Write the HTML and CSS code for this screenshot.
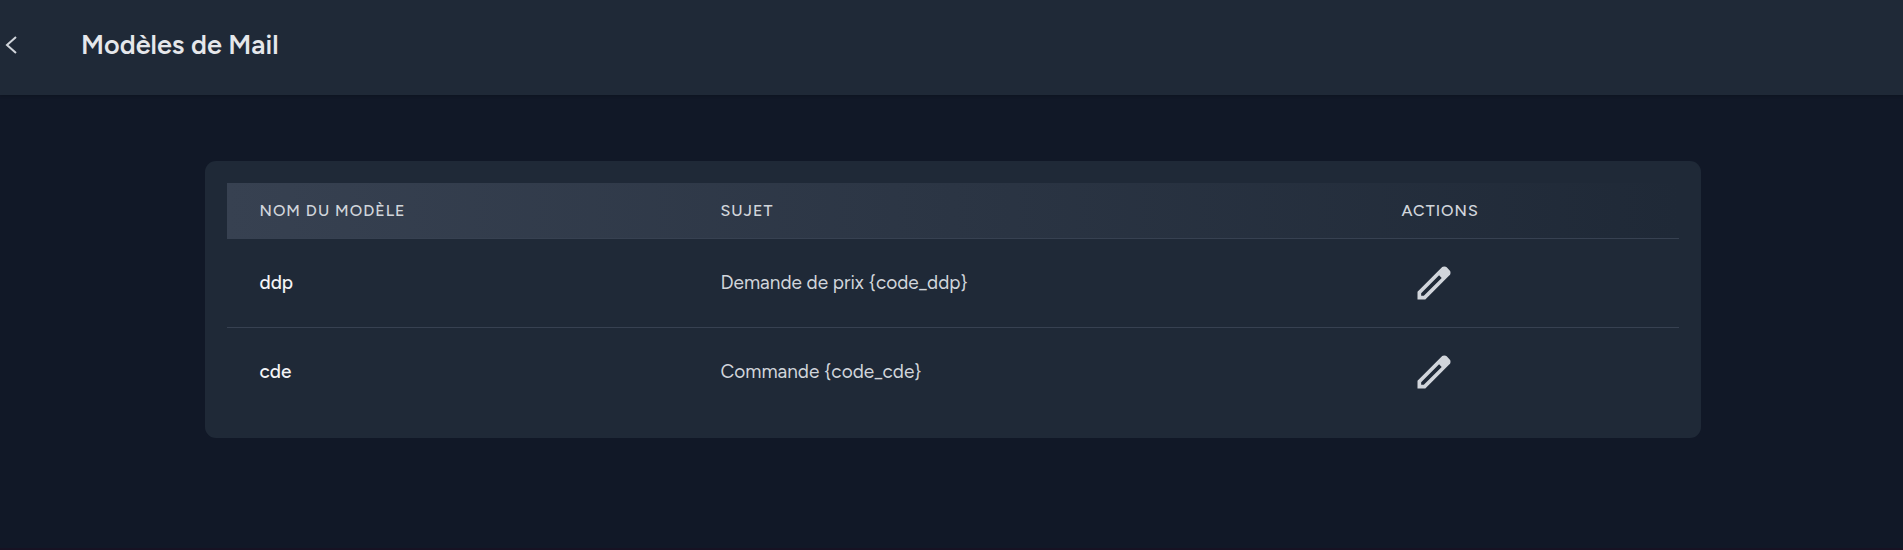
FILE: index.html
```html
<!DOCTYPE html>
<html lang="fr">
<head>
<meta charset="utf-8">
<meta name="viewport" content="width=device-width, initial-scale=1">
<title>Modèles de Mail</title>
<link rel="stylesheet" href="styles.css">
</head>
<body>
<header class="topbar">
  <a class="back" href="#" aria-label="Retour">
    <svg class="back-icon" viewBox="0 0 12 18" aria-hidden="true"><path d="M11 1 2 9l9 8"/></svg>
  </a>
  <h1 class="title">Modèles de Mail</h1>
</header>
<main class="content">
  <section class="card">
    <table class="models">
      <thead>
        <tr><th class="col-name" scope="col">Nom du modèle</th><th class="col-subject" scope="col">Sujet</th><th class="col-actions" scope="col">Actions</th></tr>
      </thead>
      <tbody>
        <tr>
          <td class="name">ddp</td>
          <td>Demande de prix {code_ddp}</td>
          <td><a class="edit" href="#" aria-label="Modifier ddp"><svg class="edit-icon" viewBox="0 -960 960 960" aria-hidden="true"><path d="M200-200h57l391-391-57-57-391 391v57Zm-80 80v-170l528-527q12-11 26.500-17t30.500-6q16 0 31 6t26 18l55 56q12 11 17.500 26t5.500 30q0 16-5.500 30.500T817-647L290-120H120Z"/></svg></a></td>
        </tr>
        <tr>
          <td class="name">cde</td>
          <td>Commande {code_cde}</td>
          <td><a class="edit" href="#" aria-label="Modifier cde"><svg class="edit-icon" viewBox="0 -960 960 960" aria-hidden="true"><path d="M200-200h57l391-391-57-57-391 391v57Zm-80 80v-170l528-527q12-11 26.500-17t30.500-6q16 0 31 6t26 18l55 56q12 11 17.500 26t5.500 30q0 16-5.500 30.500T817-647L290-120H120Z"/></svg></a></td>
        </tr>
      </tbody>
    </table>
  </section>
</main>
</body>
</html>
```
FILE: styles.css
```css
* {
  box-sizing: border-box;
}

body {
  margin: 0;
  min-height: 100vh;
  background: #111827;
  border-bottom: 2px solid #171223;
  color: #d1d5db;
  font-family: Figtree, Lato, "Open Sans", sans-serif;
}

.topbar {
  display: flex;
  align-items: center;
  gap: 64px;
  padding: 28px 5px 33px;
  background: #1f2937;
  box-shadow: 0 1px 3px rgb(0 0 0 / 20%);
}

.back {
  display: flex;
  color: #d1d5db;
}

.back-icon {
  width: 12px;
  height: 18px;
  fill: none;
  stroke: currentColor;
  stroke-width: 2;
}

.title {
  margin: 0;
  color: #e5e7eb;
  font-size: 27px;
  font-weight: 600;
  line-height: 34px;
}

.content {
  padding: 66px 20px 66px 22px;
}

.card {
  max-width: 1496px;
  margin: 0 auto;
  padding: 22px;
  border-radius: 11px;
  background: #1f2937;
}

.models {
  width: 100%;
  table-layout: fixed;
  border-collapse: separate;
  border-spacing: 0;
}

.models thead tr {
  background: linear-gradient(to right, #374151, #1f2937);
}

.models th {
  padding: 17px 33px 16px;
  border-bottom: 1px solid #374151;
  font-size: 16px;
  font-weight: 500;
  letter-spacing: 1px;
  line-height: 22px;
  text-align: left;
  text-transform: uppercase;
}

.col-name {
  width: 31.75%;
}

.col-subject {
  width: 46.9%;
}

.models td {
  padding: 22px 33px;
  font-size: 19px;
  line-height: 28px;
}

.models tbody tr:not(:last-child) td {
  border-bottom: 1px solid #374151;
}

.models .name {
  color: #f3f4f6;
  font-weight: 500;
}

.edit {
  display: flex;
  width: 66px;
  padding: 0 11px;
  color: #d1d5db;
}

.edit-icon {
  width: 44px;
  height: 44px;
  fill: currentColor;
}
```
